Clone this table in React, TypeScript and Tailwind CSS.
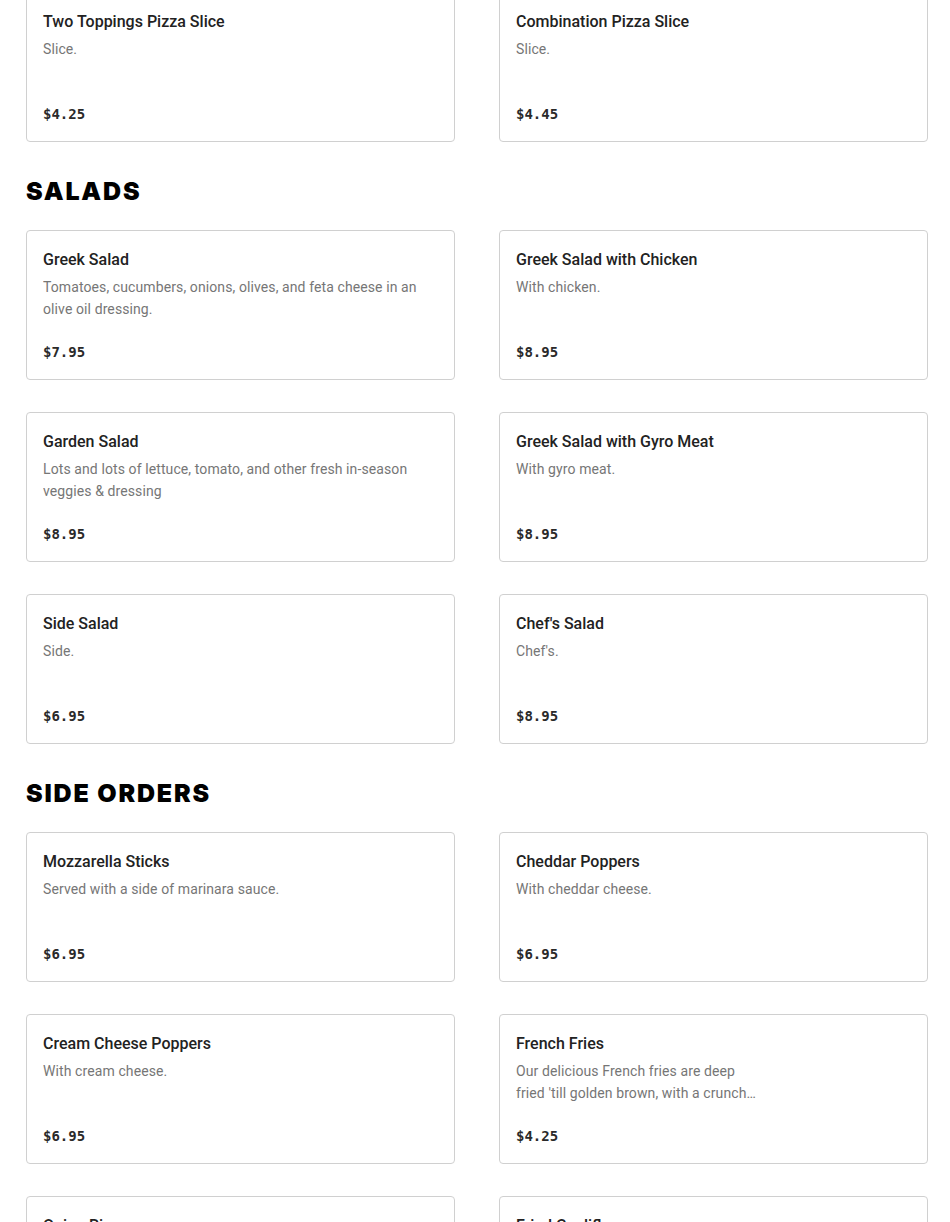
import React from 'react';

interface MenuItem {
  name: string;
  description: string;
  price: string;
  narrow?: boolean;
}

interface Section {
  title?: string;
  items: MenuItem[];
}

const sections: Section[] = [
  {
    items: [
      { name: 'Two Toppings Pizza Slice', description: 'Slice.', price: '$4.25' },
      { name: 'Combination Pizza Slice', description: 'Slice.', price: '$4.45' },
    ],
  },
  {
    title: 'SALADS',
    items: [
      {
        name: 'Greek Salad',
        description: 'Tomatoes, cucumbers, onions, olives, and feta cheese in an olive oil dressing.',
        price: '$7.95',
      },
      { name: 'Greek Salad with Chicken', description: 'With chicken.', price: '$8.95' },
      {
        name: 'Garden Salad',
        description: 'Lots and lots of lettuce, tomato, and other fresh in-season veggies & dressing',
        price: '$8.95',
      },
      { name: 'Greek Salad with Gyro Meat', description: 'With gyro meat.', price: '$8.95' },
      { name: 'Side Salad', description: 'Side.', price: '$6.95' },
      { name: "Chef's Salad", description: "Chef's.", price: '$8.95' },
    ],
  },
  {
    title: 'SIDE ORDERS',
    items: [
      { name: 'Mozzarella Sticks', description: 'Served with a side of marinara sauce.', price: '$6.95' },
      { name: 'Cheddar Poppers', description: 'With cheddar cheese.', price: '$6.95' },
      { name: 'Cream Cheese Poppers', description: 'With cream cheese.', price: '$6.95' },
      {
        name: 'French Fries',
        description:
          "Our delicious French fries are deep fried 'till golden brown, with a crunchy outside and a fluffy inside.",
        price: '$4.25',
        narrow: true,
      },
      { name: 'Onion Rings', description: 'Crispy battered onion rings.', price: '$5.95' },
      { name: 'Fried Cauliflower', description: 'Lightly fried cauliflower.', price: '$6.95' },
    ],
  },
];

const ItemCard: React.FC<{ item: MenuItem }> = ({ item }) => (
  <div className="rounded-[4px] border border-[#d0d0d0] bg-white px-4 pt-[17px] pb-[17px]">
    <h3 className="text-[16px] leading-6 font-medium text-[#222222]">{item.name}</h3>
    <p
      className={`mt-[4px] h-[44px] overflow-hidden text-[14px] leading-[22px] tracking-[0.1px] text-[#767676] line-clamp-2 ${
        item.narrow ? 'max-w-[240px]' : ''
      }`}
    >
      {item.description}
    </p>
    <p className="mt-[22px] text-[14px] leading-5 font-bold text-[#2a2a2a] font-['DejaVu_Sans_Mono',monospace]">
      {item.price}
    </p>
  </div>
);

export default function App() {
  return (
    <div className="min-h-screen bg-white font-['Roboto',sans-serif]">
      <div className="-mt-[8px] ml-[26px] w-[902px]">
        {sections.map((section, i) => (
          <section key={i} className={i > 0 ? 'mt-8' : ''}>
            {section.title && (
              <h2 className="mb-[22px] text-[25px] leading-[34px] font-black tracking-[1.8px] text-black font-['Inter',sans-serif]">
                {section.title}
              </h2>
            )}
            <div className="grid grid-cols-2 gap-x-[44px] gap-y-8">
              {section.items.map((item) => (
                <ItemCard key={item.name} item={item} />
              ))}
            </div>
          </section>
        ))}
      </div>
    </div>
  );
}
